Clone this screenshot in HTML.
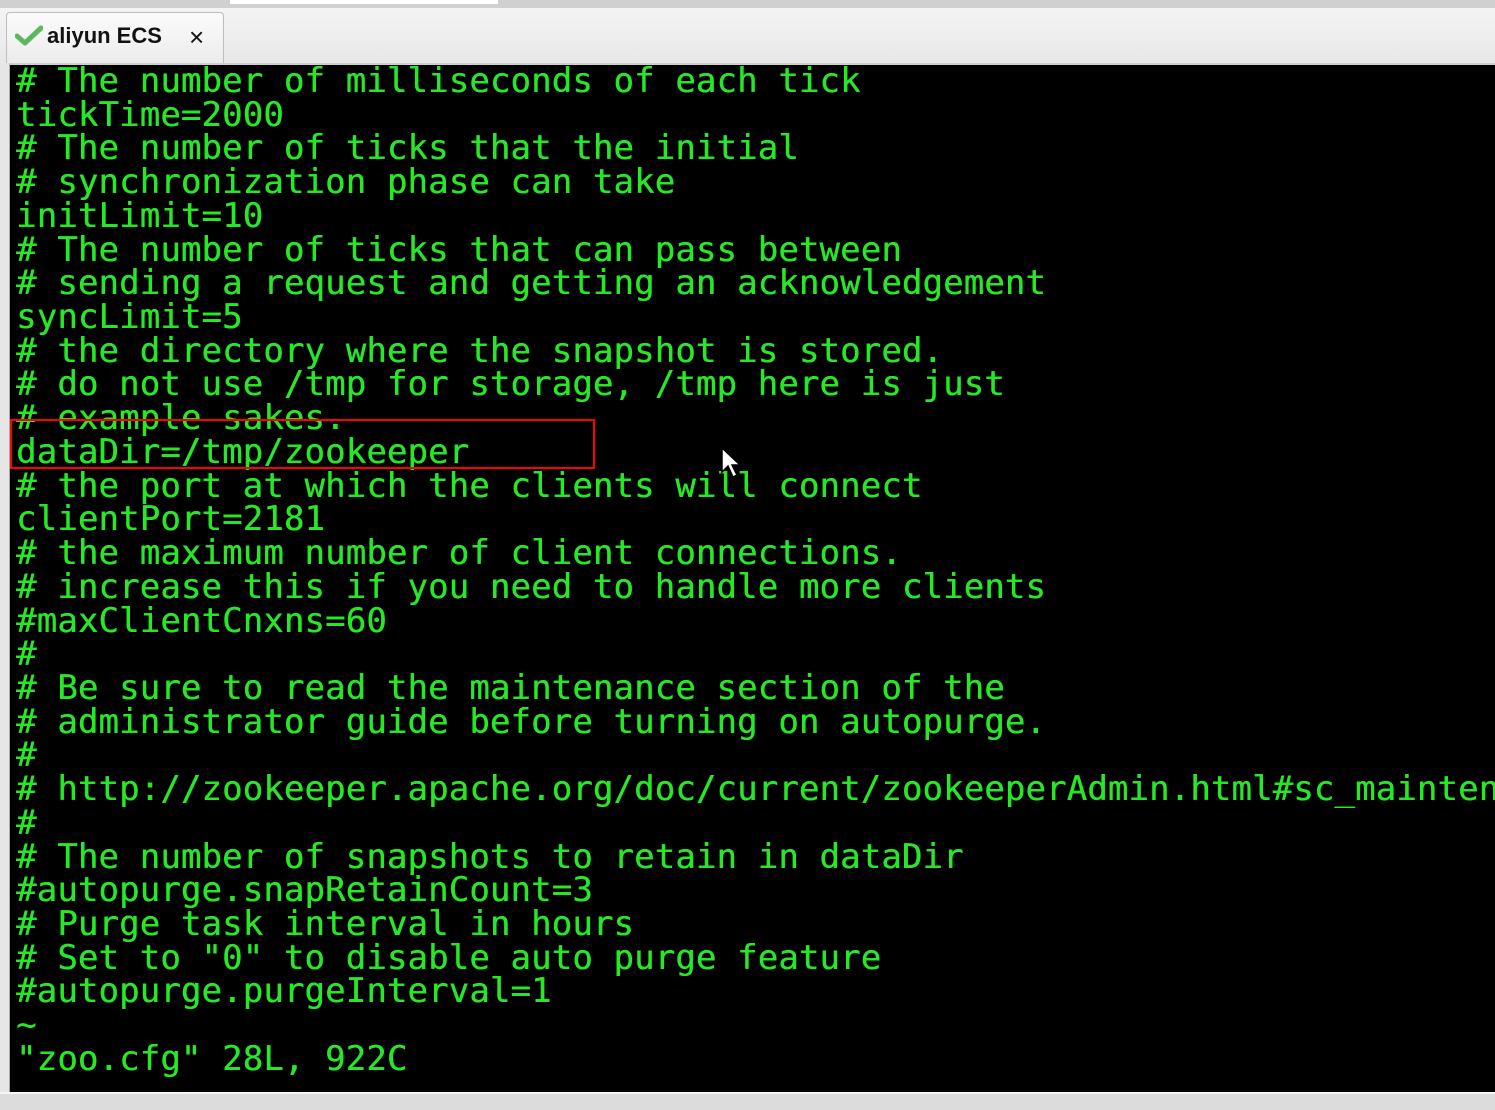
<!DOCTYPE html>
<html><head><meta charset="utf-8"><style>
html,body{margin:0;padding:0;}
body{width:1495px;height:1108px;background:#e6e6e6;position:relative;overflow:hidden;font-family:"Liberation Sans",sans-serif;}
.topbar{position:absolute;left:0;top:0;width:1495px;height:8px;background:#d0d0d0;}
.topbar2{position:absolute;left:230px;top:0;width:268px;height:4px;background:#fff;}
.tabrow{position:absolute;left:0;top:8px;width:1495px;height:55px;background:linear-gradient(#f4f4f4,#e8e8e8);}
.tab{position:absolute;left:6px;top:12px;width:216px;height:50px;background:linear-gradient(#fbfbfb,#ececec);border:1px solid #bdbdbd;border-bottom:none;border-radius:4px 4px 0 0;}
.tab .t{position:absolute;left:40px;top:10px;font-weight:bold;font-size:22px;color:#111;}
.tab .x{position:absolute;left:182px;top:9px;font-size:26px;color:#111;}
.term{position:absolute;left:9px;top:63px;width:1485px;height:1028px;background:#000;border-top:2px solid #cfcfcf;border-left:1px solid #aaa;overflow:hidden;}
pre{position:absolute;left:6px;top:0px;margin:0;font-family:"DejaVu Sans Mono","Liberation Mono",monospace;font-size:34px;line-height:33.72px;color:#27e827;white-space:pre;letter-spacing:0.13px;text-shadow:0.4px 0 0 #27e827;}
.box{position:absolute;left:10px;top:419px;width:581px;height:46px;border:2px solid #f00;}
.bottom{position:absolute;left:0;top:1092px;width:1495px;height:16px;background:#dcdcdc;border-top:2px solid #f5f5f5;}
</style></head><body>
<div class="topbar"></div><div class="topbar2"></div>
<div class="tabrow"></div>
<div class="tab">
<svg style="position:absolute;left:8px;top:12px" width="28" height="22" viewBox="0 0 28 22"><path d="M2 11 L10 18 L26 3" fill="none" stroke="#5cb85c" stroke-width="5" stroke-linecap="round" stroke-linejoin="round"/></svg>
<span class="t">aliyun ECS</span><span class="x">×</span></div>
<div class="term"><pre># The number of milliseconds of each tick
tickTime=2000
# The number of ticks that the initial
# synchronization phase can take
initLimit=10
# The number of ticks that can pass between
# sending a request and getting an acknowledgement
syncLimit=5
# the directory where the snapshot is stored.
# do not use /tmp for storage, /tmp here is just
# example sakes.
dataDir=/tmp/zookeeper
# the port at which the clients will connect
clientPort=2181
# the maximum number of client connections.
# increase this if you need to handle more clients
#maxClientCnxns=60
#
# Be sure to read the maintenance section of the
# administrator guide before turning on autopurge.
#
# http://zookeeper.apache.org/doc/current/zookeeperAdmin.html#sc_maintenance
#
# The number of snapshots to retain in dataDir
#autopurge.snapRetainCount=3
# Purge task interval in hours
# Set to "0" to disable auto purge feature
#autopurge.purgeInterval=1
~
"zoo.cfg" 28L, 922C</pre></div>
<div class="box"></div>
<svg style="position:absolute;left:720px;top:446px" width="24" height="36" viewBox="0 0 24 36"><path d="M2 2 L2 26 L8 20 L13 31 L17 29 L12 19 L20 19 Z" fill="#fff" stroke="#000" stroke-width="1.5"/></svg>
<div class="bottom"></div>
</body></html>
